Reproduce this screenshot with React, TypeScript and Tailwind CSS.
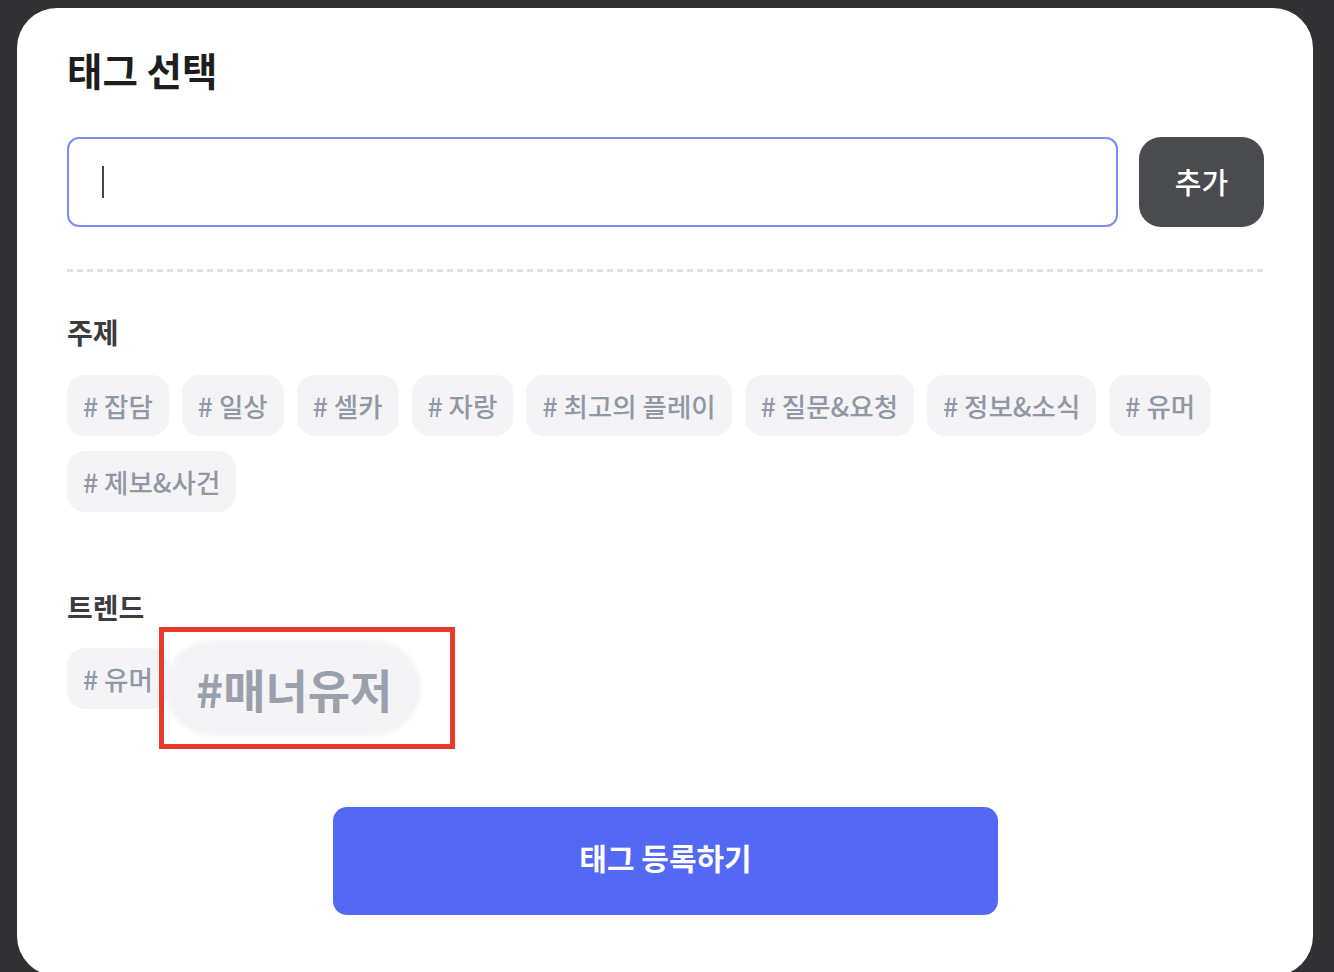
import React from "react";

const topics = ["잡담", "일상", "셀카", "자랑", "최고의 플레이", "질문&요청", "정보&소식", "유머", "제보&사건"];

function Chip({ label }: { label: string }) {
  return (
    <div className="h-[61px] px-[16px] rounded-[18px] bg-[#f4f4f7] text-[26.5px] text-[#9197a4] flex items-center whitespace-nowrap font-medium">
      # {label}
    </div>
  );
}

export default function App() {
  return (
    <div
      className="w-[1334px] h-[972px] bg-[#313133] overflow-hidden pt-[8px] pl-[17px] pr-[21px]"
      style={{ fontFamily: '"Noto Sans CJK KR", "Noto Sans", sans-serif' }}
    >
      <div className="relative bg-white rounded-[40px] h-[968px] pl-[50px] pr-[49px] pt-[33px]">
        <h1 className="text-[38.5px] leading-[56px] font-bold text-[#1e1e20]">태그 선택</h1>

        <div className="mt-[40px] flex gap-[21px] h-[90px]">
          <div className="flex-1 h-full rounded-[12px] border-2 border-[#7b8cf7] flex items-center pl-[33px]">
            <div className="w-[2px] h-[32px] bg-[#444]" />
          </div>
          <button className="w-[125px] h-full rounded-[22px] bg-[#4a4b4f] text-white text-[29px] font-medium">
            추가
          </button>
        </div>

        <div className="mt-[42px] h-[3px] bg-[repeating-linear-gradient(90deg,#e0e0e3_0_6px,transparent_6px_10px)]" />

        <div className="mt-[42px] text-[28px] leading-[36px] font-bold text-[#3c3c3f]">주제</div>
        <div className="mt-[25px] flex flex-wrap gap-x-[13px] gap-y-[15px]">
          {topics.map((t) => (
            <Chip key={t} label={t} />
          ))}
        </div>

        <div className="mt-[77px] text-[28px] leading-[36px] font-bold text-[#3c3c3f]">트렌드</div>
        <div className="mt-[23px] flex gap-[14px]">
          <Chip label="유머" />
        </div>

        <div className="mt-[98px] flex justify-center">
          <button className="w-[665px] h-[108px] pb-[7px] rounded-[14px] bg-[#5369f5] text-white text-[30px] font-bold">
            태그 등록하기
          </button>
        </div>

        <div className="absolute left-[148px] top-[632px] w-[256px] h-[96px] flex items-center pl-[31px]">
          <div className="absolute inset-0 rounded-[48px] bg-[#f4f4f7] blur-[2px]" />
          <span className="relative text-[46px] font-bold text-[#9aa0ac] whitespace-nowrap">#매너유저</span>
        </div>
        <div className="absolute left-[142px] top-[619px] w-[296px] h-[122px] border-[5px] border-[#e63a2a]" />
      </div>
    </div>
  );
}
